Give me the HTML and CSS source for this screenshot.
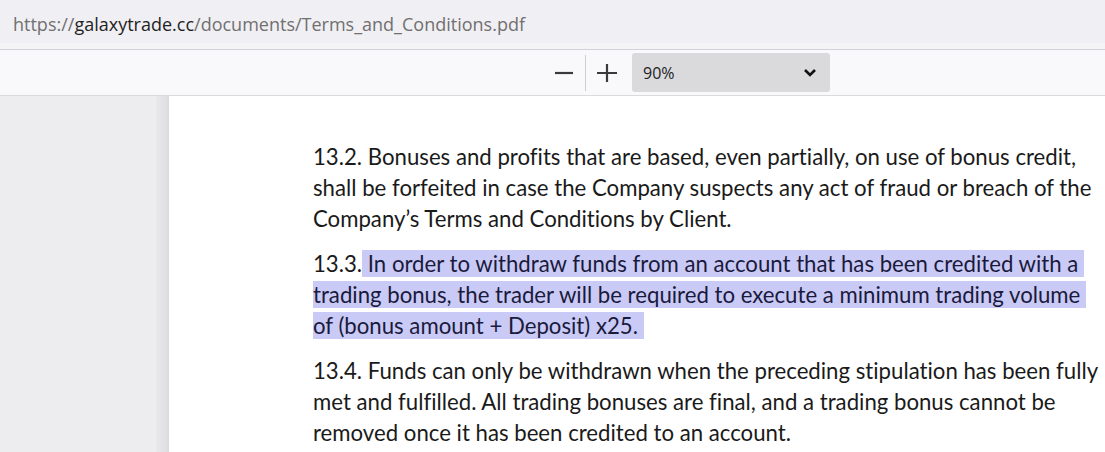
FILE: index.html
```html
<!DOCTYPE html>
<html lang="en">
<head>
    <meta charset="UTF-8">
    <meta name="viewport" content="width=device-width, initial-scale=1.0">
    <title>Terms_and_Conditions.pdf</title>
    <link rel="stylesheet" href="styles.css">
</head>
<body>
    <div class="urlbar">
        <span class="scheme">https://</span><span class="host">galaxytrade.cc</span><span class="path">/documents/Terms_and_Conditions.pdf</span>
    </div>
    <div class="toolbar">
        <button type="button" class="tool" title="Zoom out">
            <svg width="20" height="20" viewBox="0 0 20 20"><path d="M1 10h18" stroke="#3a3a3a" stroke-width="2.2"/></svg>
        </button>
        <span class="sep"></span>
        <button type="button" class="tool" title="Zoom in">
            <svg width="22" height="20" viewBox="0 0 22 20"><path d="M1 10h20M11 1v18" stroke="#3a3a3a" stroke-width="2.2"/></svg>
        </button>
        <div class="zoomselect">
            <span>90%</span>
            <svg width="14" height="9" viewBox="0 0 14 9"><path d="M2 2l5 5 5-5" fill="none" stroke="#111" stroke-width="2.6"/></svg>
        </div>
    </div>
    <section class="viewer">
        <div class="side"></div>
        <div class="shadow"></div>
        <div class="page">
            <div class="para">
                <div class="line">13.2. Bonuses and profits that are based, even partially, on use of bonus credit,</div>
                <div class="line">shall be forfeited in case the Company suspects any act of fraud or breach of the</div>
                <div class="line">Company’s Terms and Conditions by Client.</div>
            </div>
            <div class="para second">
                <div class="line">13.3.<span class="mark"> In order to withdraw funds from an account that has been credited with a </span></div>
                <div class="line"><span class="mark">trading bonus, the trader will be required to execute a minimum trading volume </span></div>
                <div class="line"><span class="mark">of (bonus amount + Deposit) x25. </span></div>
            </div>
            <div class="para third">
                <div class="line">13.4. Funds can only be withdrawn when the preceding stipulation has been fully</div>
                <div class="line">met and fulfilled. All trading bonuses are final, and a trading bonus cannot be</div>
                <div class="line">removed once it has been credited to an account.</div>
            </div>
        </div>
    </section>
</body>
</html>
```

FILE: styles.css
```css
body {
    margin: 0;
    width: 1105px;
    height: 452px;
    overflow: hidden;
    background: #ffffff;
    font-family: "Open Sans", "Noto Sans", sans-serif;
}

/* address bar */
.urlbar {
    height: 50px;
    box-sizing: border-box;
    padding: 12px 0 0 13px;
    background: linear-gradient(#f0eff3 0, #f0eff3 43px, #f4f3f6 43px);
    border-bottom: 1px solid #d3d3d7;
    font-size: 18px;
    line-height: 24px;
    color: #707070;
    white-space: nowrap;
}
.host {
    color: #1f1f1f;
}

/* pdf toolbar */
.toolbar {
    height: 46px;
    box-sizing: border-box;
    background: #f9f9fb;
    border-bottom: 1px solid #dadadd;
    display: flex;
    align-items: center;
    padding-left: 554px;
}
.tool {
    border: none;
    background: none;
    padding: 0;
    display: flex;
    align-items: center;
}
.sep {
    width: 1px;
    height: 36px;
    background: #cfcfd2;
    margin: 0 10px 0 11px;
}
.zoomselect {
    margin-left: 14px;
    width: 198px;
    height: 39px;
    box-sizing: border-box;
    background: #dadadd;
    border-radius: 3px;
    display: flex;
    align-items: center;
    justify-content: space-between;
    padding: 0 13px 0 11px;
    font-size: 16px;
    color: #222;
}

/* document area */
.viewer {
    display: flex;
    height: 356px;
}
.side {
    width: 156px;
    background: #ededef;
}
.shadow {
    width: 13px;
    background: linear-gradient(90deg, #e9e9eb, #e0e0e2 75%, #d8d8da);
}
.page {
    flex: 1;
    background: #fff;
    padding: 45px 0 0 144px;
    font-family: Lato, "Noto Sans", sans-serif;
    font-size: 22.2px;
    font-variant-ligatures: none;
    color: #1a1a1a;
}
.line {
    height: 31px;
    line-height: 31px;
    white-space: nowrap;
}
.para.second {
    margin-top: 14px;
}
.para.third {
    margin-top: 14px;
}
.mark {
    background: #cacaf6;
    color: #1a1a3c;
    white-space: pre;
}
```
